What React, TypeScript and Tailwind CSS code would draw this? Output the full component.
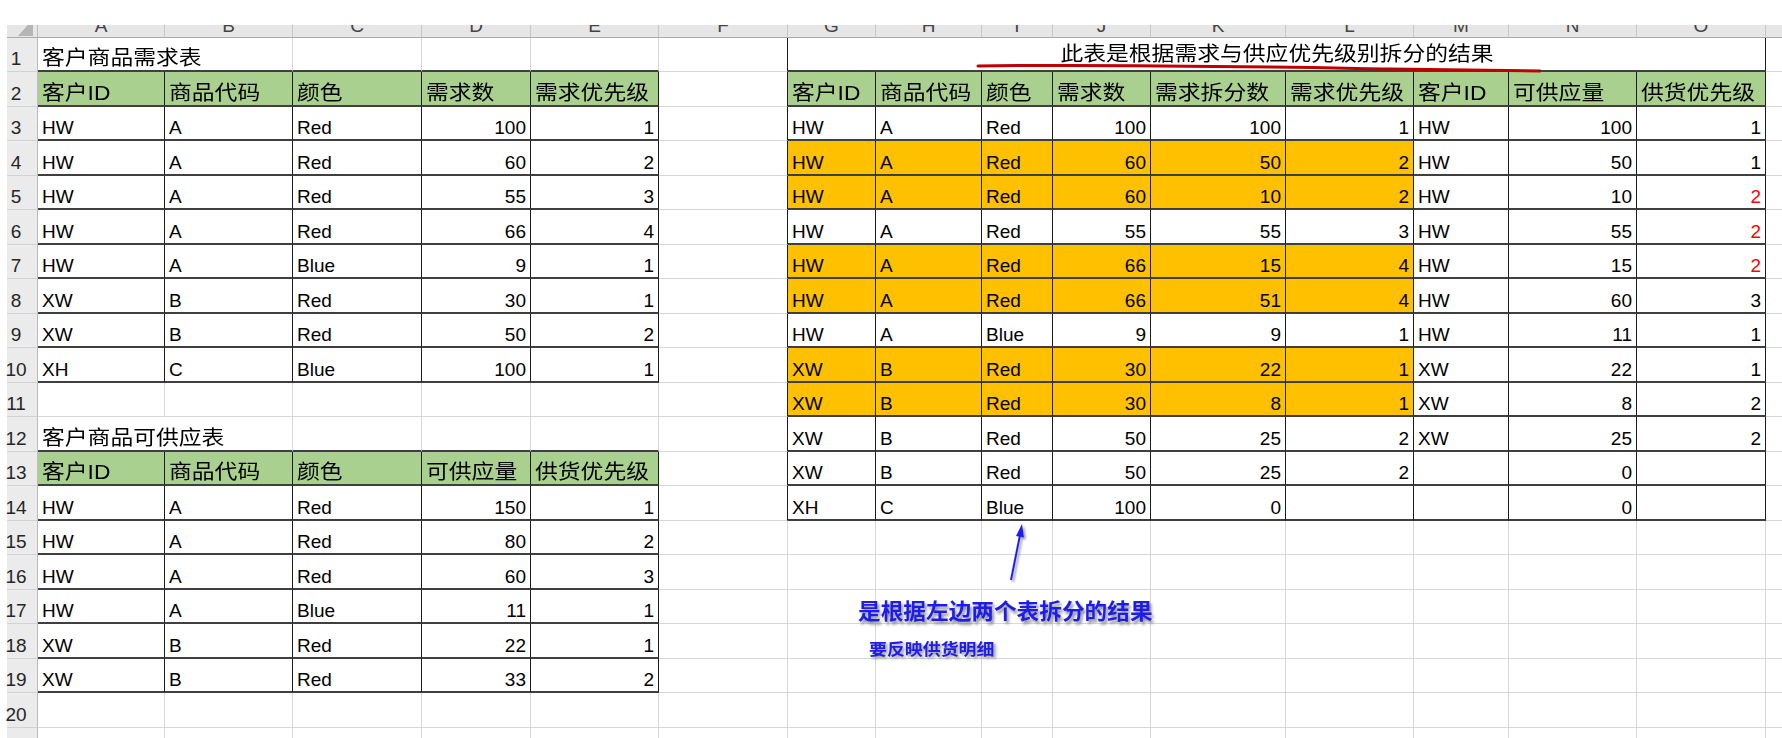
import React from "react";

type Cell = { t: string; num?: boolean; red?: boolean } | null;

const LETTERS = ["A", "B", "C", "D", "E", "F", "G", "H", "I", "J", "K", "L", "M", "N", "O"];

const GRID =
  "grid grid-cols-[7px_31px_127px_128px_129px_109px_128px_129px_88px_106px_71px_98px_135px_128px_95px_128px_129px_16px]";

const demandHead = ["客户ID", "商品代码", "颜色", "需求数", "需求优先级"];
const demand: (string | number)[][] = [
  ["HW", "A", "Red", 100, 1],
  ["HW", "A", "Red", 60, 2],
  ["HW", "A", "Red", 55, 3],
  ["HW", "A", "Red", 66, 4],
  ["HW", "A", "Blue", 9, 1],
  ["XW", "B", "Red", 30, 1],
  ["XW", "B", "Red", 50, 2],
  ["XH", "C", "Blue", 100, 1],
];

const supplyHead = ["客户ID", "商品代码", "颜色", "可供应量", "供货优先级"];
const supply: (string | number)[][] = [
  ["HW", "A", "Red", 150, 1],
  ["HW", "A", "Red", 80, 2],
  ["HW", "A", "Red", 60, 3],
  ["HW", "A", "Blue", 11, 1],
  ["XW", "B", "Red", 22, 1],
  ["XW", "B", "Red", 33, 2],
];

const resultHead = ["客户ID", "商品代码", "颜色", "需求数", "需求拆分数", "需求优先级", "客户ID", "可供应量", "供货优先级"];
const result: (string | number | null)[][] = [
  ["HW", "A", "Red", 100, 100, 1, "HW", 100, 1],
  ["HW", "A", "Red", 60, 50, 2, "HW", 50, 1],
  ["HW", "A", "Red", 60, 10, 2, "HW", 10, 2],
  ["HW", "A", "Red", 55, 55, 3, "HW", 55, 2],
  ["HW", "A", "Red", 66, 15, 4, "HW", 15, 2],
  ["HW", "A", "Red", 66, 51, 4, "HW", 60, 3],
  ["HW", "A", "Blue", 9, 9, 1, "HW", 11, 1],
  ["XW", "B", "Red", 30, 22, 1, "XW", 22, 1],
  ["XW", "B", "Red", 30, 8, 1, "XW", 8, 2],
  ["XW", "B", "Red", 50, 25, 2, "XW", 25, 2],
  ["XW", "B", "Red", 50, 25, 2, null, 0, null],
  ["XH", "C", "Blue", 100, 0, null, null, 0, null],
];

// rows (1-based) whose supply priority is shown in red
const redRows = new Set([5, 6, 7]);
const orangeRows = new Set([4, 5, 7, 8, 10, 11]);

function toCell(v: string | number | null): Cell {
  if (v === null) return null;
  if (typeof v === "number") return { t: String(v), num: true };
  return { t: v };
}

/** Build the 20 x 15 sheet */
function buildSheet(): Cell[][] {
  const rows: Cell[][] = Array.from({ length: 21 }, () => Array(15).fill(null));
  rows[1][0] = { t: "客户商品需求表" };
  demandHead.forEach((h, i) => (rows[2][i] = { t: h }));
  demand.forEach((line, j) => line.forEach((v, i) => (rows[3 + j][i] = toCell(v))));
  rows[12][0] = { t: "客户商品可供应表" };
  supplyHead.forEach((h, i) => (rows[13][i] = { t: h }));
  supply.forEach((line, j) => line.forEach((v, i) => (rows[14 + j][i] = toCell(v))));
  rows[1][6] = { t: "此表是根据需求与供应优先级别拆分的结果" };
  resultHead.forEach((h, i) => (rows[2][6 + i] = { t: h }));
  result.forEach((line, j) =>
    line.forEach((v, i) => {
      const cell = toCell(v);
      if (cell && i === 8 && redRows.has(3 + j)) cell.red = true;
      rows[3 + j][6 + i] = cell;
    })
  );
  return rows;
}

const sheet = buildSheet();

function inTable(r: number, c: number) {
  if (c < 0 || c > 14) return false;
  if (c <= 4 && r >= 2 && r <= 10) return true;
  if (c <= 4 && r >= 13 && r <= 19) return true;
  if (c >= 6 && r >= 1 && r <= 14) return true;
  return false;
}

function fillFor(r: number, c: number) {
  if ((r === 2 || r === 13) && c <= 4) return "bg-[#a9d08e]";
  if (r === 2 && c >= 6) return "bg-[#a9d08e]";
  if (orangeRows.has(r) && c >= 6 && c <= 11) return "bg-[#ffc000]";
  return "bg-white";
}

const hasCjk = (t: string) => /[\u4e00-\u9fff]/.test(t);

function Text({ t, align }: { t: string; align: "left" | "right" | "center" }) {
  if (hasCjk(t)) {
    const origin = align === "left" ? "origin-left" : align === "right" ? "origin-right" : "origin-center";
    return (
      <span className={`inline-block whitespace-nowrap text-[20px] leading-none scale-x-[1.14] ${origin}`}>{t}</span>
    );
  }
  return <span className="whitespace-nowrap text-[19px] leading-none">{t}</span>;
}

function SheetCell({ r, c, span }: { r: number; c: number; span?: string }) {
  const cell = sheet[r][c];
  const last = span === "col-span-9" ? 14 : span === "col-span-2" ? c + 1 : c;
  const rightDark = inTable(r, last) || inTable(r, last + 1);
  const bottomDark = inTable(r, c) || inTable(r + 1, c);
  const right = rightDark ? "border-r border-r-[#1c1c1c]" : "border-r border-r-[#d6d6d6]";
  const bottom = bottomDark ? "border-b-2 border-b-[#3f3f3f]" : "border-b border-b-[#d6d6d6]";
  const isTitle = span === "col-span-9";
  const justify = isTitle ? "justify-center" : cell?.num ? "justify-end" : "justify-start";
  const color = cell?.red ? "text-[#ff0000]" : "text-black";

  return (
    <div
      className={`flex items-end px-[4px] text-[19px] leading-none ${isTitle ? "pb-[6px]" : "pb-[2px]"} ${justify} ${right} ${bottom} ${fillFor(
        r,
        c
      )} ${color} ${span ?? ""}`}
    >
      {cell && (
        <span className={isTitle ? "underline decoration-1 underline-offset-[3px]" : ""}>
          <Text t={cell.t} align={isTitle ? "center" : cell.num ? "right" : "left"} />
        </span>
      )}
    </div>
  );
}

function SheetRow({ r }: { r: number }) {
  const cells: React.ReactNode[] = [];
  for (let c = 0; c < 15; c++) {
    if ((r === 1 || r === 12) && c === 0) {
      cells.push(<SheetCell key={c} r={r} c={c} span="col-span-2" />);
      c++;
      continue;
    }
    if (r === 1 && c === 6) {
      cells.push(<SheetCell key={c} r={r} c={c} span="col-span-9" />);
      break;
    }
    cells.push(<SheetCell key={c} r={r} c={c} />);
  }
  return (
    <div className={`${GRID} ${r % 2 === 1 ? "h-[34px]" : "h-[35px]"}`}>
      <div className="bg-white" />
      <div className="flex items-end justify-center pr-[12px] pb-[3px] bg-[#ebebeb] border-r border-r-[#bcbcbc] border-b border-b-[#d2d2d2] text-[19px] leading-none text-[#262626]">
        {r}
      </div>
      {cells}
      <div className="border-b border-b-[#d6d6d6] bg-white" />
    </div>
  );
}

function ColumnHeader() {
  return (
    <div className={`${GRID} h-[13px] overflow-hidden`}>
      <div className="bg-white" />
      <div className="relative bg-[#e6e6e6] border-r border-r-[#bcbcbc] border-b border-b-[#ababab]">
        <svg className="absolute left-[7px] top-0" width="20" height="12" viewBox="0 0 20 12">
          <polygon points="19,-6 19,11 4,11" fill="#b5b5b5" />
        </svg>
      </div>
      {LETTERS.map((l) => (
        <div
          key={l}
          className="flex items-end justify-center overflow-hidden pb-[2px] bg-[#e6e6e6] border-r border-r-[#c6c6c6] border-b border-b-[#ababab] text-[19px] leading-none text-[#444]"
        >
          {l}
        </div>
      ))}
      <div className="bg-[#e6e6e6] border-b border-b-[#ababab]" />
    </div>
  );
}

function Annotations() {
  return (
    <>
      {/* hand drawn red underline of the title */}
      <svg className="absolute left-[970px] top-[58px]" width="580" height="20" viewBox="0 0 580 20">
        <path
          d="M8 8 C 150 6, 300 9, 420 11 S 555 13, 570 13"
          fill="none"
          stroke="#c00000"
          strokeWidth="3"
          strokeLinecap="round"
        />
      </svg>

      {/* blue arrow pointing at the result table */}
      <svg className="absolute left-[995px] top-[515px]" width="45" height="80" viewBox="0 0 45 80">
        <defs>
          <filter id="arrowShadow" x="-50%" y="-50%" width="200%" height="200%">
            <feDropShadow dx="2" dy="2" stdDeviation="1.2" floodColor="#777" floodOpacity="0.7" />
          </filter>
        </defs>
        <g filter="url(#arrowShadow)">
          <line x1="16" y1="65" x2="25" y2="20" stroke="#1f1ff2" strokeWidth="2" />
          <polygon points="27,9 29,22.5 21,21" fill="#1f1ff2" />
        </g>
      </svg>

      <div className="absolute left-[858px] top-[601px] font-bold text-[22px] leading-none text-[#1c1cf0] [text-shadow:2px_3px_3px_#8c8c8c]">
        <span className="inline-block whitespace-nowrap origin-left scale-x-[1.03]">是根据左边两个表拆分的结果</span>
      </div>
      <div className="absolute left-[869px] top-[642px] font-bold text-[16px] leading-none text-[#1c1cf0] [text-shadow:2px_2px_3px_#8c8c8c]">
        <span className="inline-block whitespace-nowrap origin-left scale-x-[1.12]">要反映供货明细</span>
      </div>
    </>
  );
}

export default function App() {
  const rows = Array.from({ length: 20 }, (_, i) => i + 1);
  return (
    <div className="relative h-[738px] w-[1782px] overflow-hidden bg-white font-['Liberation_Sans','Noto_Sans_CJK_SC',sans-serif]">
      <div className="h-[25px] bg-white" />
      <ColumnHeader />
      {rows.map((r) => (
        <SheetRow key={r} r={r} />
      ))}
      {/* partial row 21 at the bottom edge */}
      <div className={`${GRID} h-[10px]`}>
        <div className="bg-white" />
        <div className="bg-[#ebebeb] border-r border-r-[#bcbcbc]" />
        {LETTERS.map((l) => (
          <div key={l} className="border-r border-r-[#d6d6d6] bg-white" />
        ))}
        <div className="bg-white" />
      </div>
      <Annotations />
    </div>
  );
}
